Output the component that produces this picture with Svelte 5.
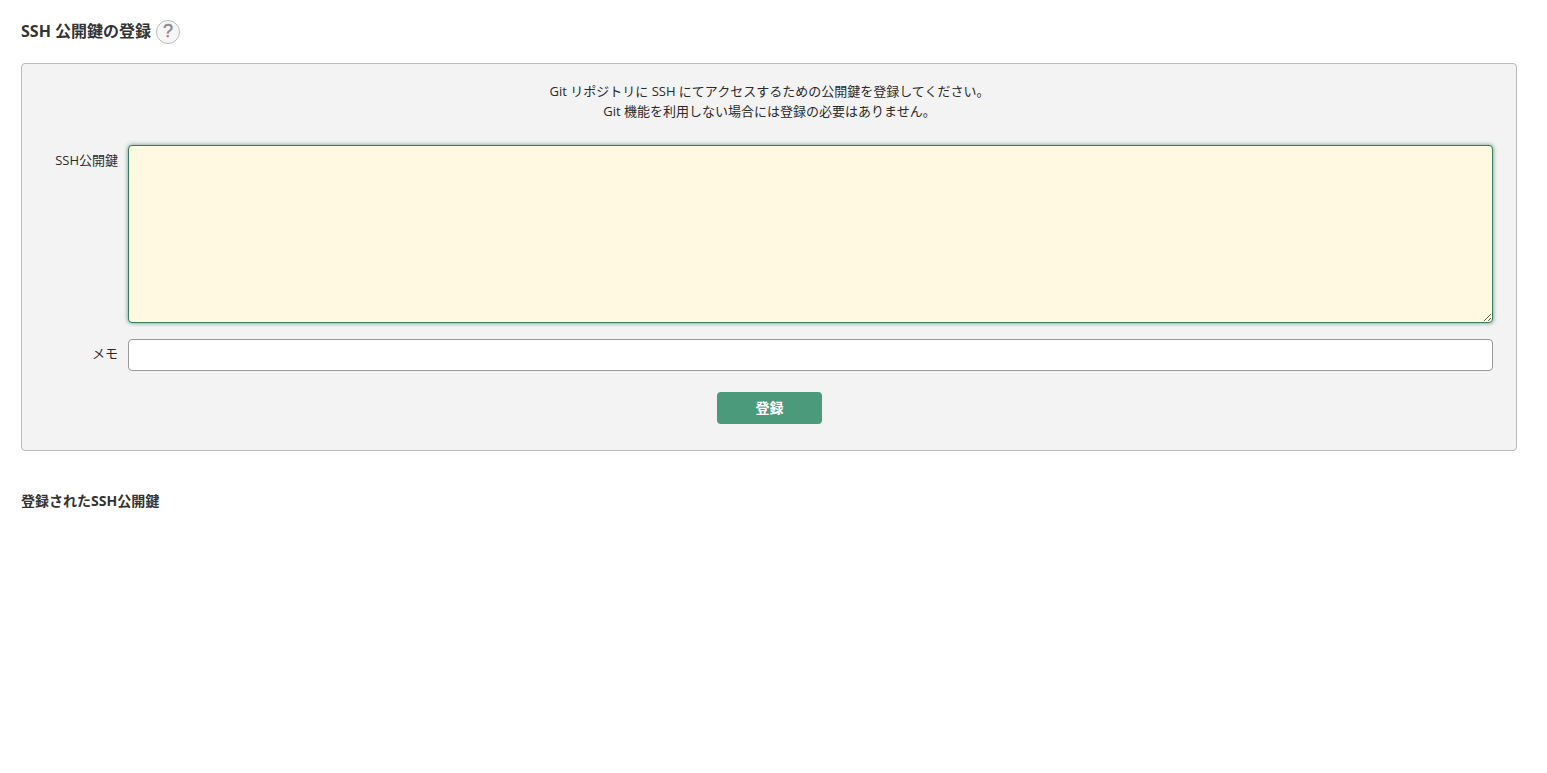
<script lang="ts">
    let publicKey = $state("");
    let memo = $state("");
</script>

<main class="page">
    <h1 class="page__title">
        SSH 公開鍵の登録
        <span class="help" aria-label="ヘルプ">?</span>
    </h1>

    <form class="panel" onsubmit={(event) => event.preventDefault()}>
        <p class="panel__lead">
            Git リポジトリに SSH にてアクセスするための公開鍵を登録してください。<br />
            Git 機能を利用しない場合には登録の必要はありません。
        </p>

        <div class="row">
            <label class="row__label" for="ssh-key">SSH公開鍵</label>
            <textarea id="ssh-key" class="field field--area" bind:value={publicKey}></textarea>
        </div>

        <div class="row row--memo">
            <label class="row__label row__label--middle" for="ssh-memo">メモ</label>
            <input id="ssh-memo" class="field field--input" type="text" bind:value={memo} />
        </div>

        <div class="actions">
            <button class="submit" type="submit">登録</button>
        </div>
    </form>

    <h2 class="page__subtitle">登録されたSSH公開鍵</h2>
</main>

<style>
    :global(body) {
        margin: 0;
        background: #fff;
        color: #333;
        font-family: "Open Sans", "Noto Sans CJK JP", sans-serif;
    }

    .page {
        box-sizing: border-box;
        width: 1547px;
        height: 773px;
        padding: 19px 30px 0 21px;
        overflow: hidden;
    }

    .page__title {
        display: flex;
        align-items: center;
        gap: 5px;
        height: 25px;
        margin: 0 0 19px;
        color: #333;
        font-size: 16px;
        font-weight: 700;
        line-height: 25px;
    }

    .help {
        display: flex;
        align-items: center;
        justify-content: center;
        box-sizing: border-box;
        width: 24px;
        height: 24px;
        border: 1px solid #bbb;
        border-radius: 50%;
        background: #f6f6f6;
        color: #888;
        font-family: "Liberation Sans", sans-serif;
        font-size: 18px;
        font-weight: 400;
        -webkit-text-stroke: 0.4px #888;
    }

    .panel {
        box-sizing: border-box;
        height: 388px;
        padding: 17px 23px 0 20px;
        border: 1px solid #b9b9b9;
        border-radius: 4px;
        background: #f3f3f3;
    }

    .panel__lead {
        margin: 0 0 24px;
        padding-left: 4px;
        color: #2a2a2a;
        font-size: 13px;
        line-height: 20px;
        text-align: center;
    }

    .row {
        display: flex;
        gap: 10px;
    }

    .row--memo {
        margin-top: 16px;
    }

    .row__label {
        flex: 0 0 76px;
        padding-top: 6px;
        color: #2a2a2a;
        font-size: 13px;
        line-height: 18px;
        text-align: right;
    }

    .row__label--middle {
        padding-top: 5px;
    }

    .field {
        display: block;
        flex: 1;
        box-sizing: border-box;
        margin: 0;
        font: inherit;
        outline: none;
    }

    .field--area {
        height: 178px;
        border: 1px solid #3a7a60;
        border-radius: 4px;
        background: #fff9e1;
        box-shadow: 0 0 4px rgba(58, 122, 96, 0.8);
        resize: vertical;
    }

    .field--input {
        height: 32px;
        border: 1px solid #999;
        border-radius: 4px;
        background: #fff;
    }

    .actions {
        display: flex;
        justify-content: center;
        margin-top: 21px;
        padding-left: 4px;
    }

    .submit {
        width: 105px;
        height: 32px;
        padding: 0 0 3px;
        border: 0;
        border-radius: 4px;
        background: #4b9a7b;
        color: #fff;
        font: inherit;
        font-size: 14px;
        font-weight: 700;
    }

    .page__subtitle {
        margin: 40px 0 0;
        color: #333;
        font-size: 14px;
        font-weight: 700;
        line-height: 20px;
    }
</style>
